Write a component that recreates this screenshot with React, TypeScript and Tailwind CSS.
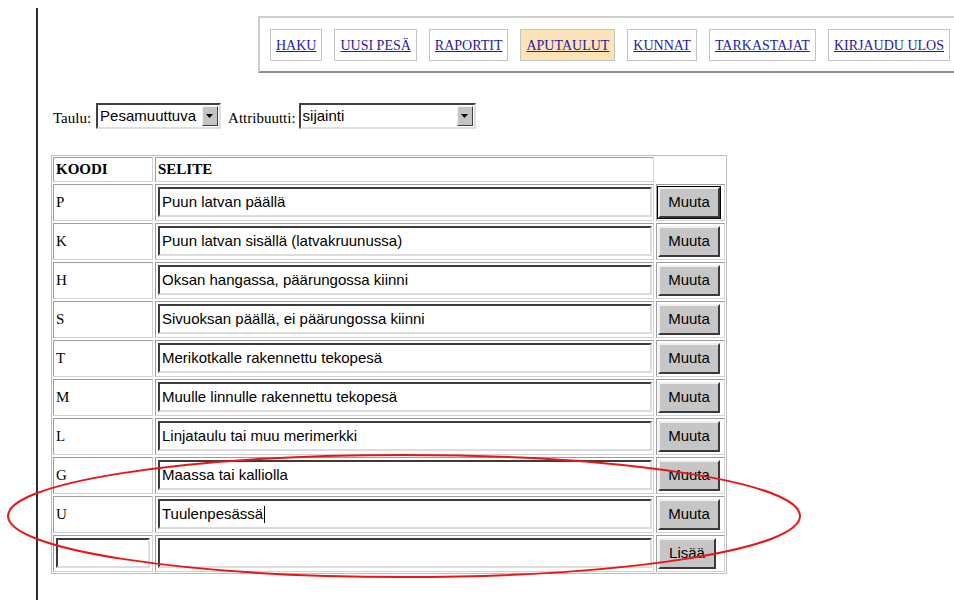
import React from "react";

const navItems = [
  { label: "HAKU" },
  { label: "UUSI PESÄ" },
  { label: "RAPORTIT" },
  { label: "APUTAULUT", active: true },
  { label: "KUNNAT" },
  { label: "TARKASTAJAT" },
  { label: "KIRJAUDU ULOS" },
];

const rows = [
  { code: "P", text: "Puun latvan päällä" },
  { code: "K", text: "Puun latvan sisällä (latvakruunussa)" },
  { code: "H", text: "Oksan hangassa, päärungossa kiinni" },
  { code: "S", text: "Sivuoksan päällä, ei päärungossa kiinni" },
  { code: "T", text: "Merikotkalle rakennettu tekopesä" },
  { code: "M", text: "Muulle linnulle rakennettu tekopesä" },
  { code: "L", text: "Linjataulu tai muu merimerkki" },
  { code: "G", text: "Maassa tai kalliolla" },
  { code: "U", text: "Tuulenpesässä", caret: true },
];

const serif = "font-['Liberation_Serif',_'Times_New_Roman',_serif]";
const sans = "font-['Liberation_Sans',_Arial,_sans-serif]";

function Select({ value, width }: { value: string; width: string }) {
  return (
    <div
      className={`flex h-[26px] ${width} border-2 border-t-[#404040] border-l-[#404040] border-b-[#dedede] border-r-[#dedede] bg-white`}
    >
      <div className={`flex-1 flex items-center pl-[2px] text-[15px] text-black ${sans} whitespace-nowrap overflow-hidden`}>
        {value}
      </div>
      <div className="my-[1px] mr-[1px] w-[16px] flex items-center justify-center bg-[#c4c4c4] border border-t-[#f2f2f2] border-l-[#f2f2f2] border-b-[#404040] border-r-[#404040]">
        <svg width="8" height="5" viewBox="0 0 8 5">
          <path d="M0 0 H7 L3.5 4 Z" fill="#000" />
        </svg>
      </div>
    </div>
  );
}

function Field({ value, caret, width }: { value: string; caret?: boolean; width: string }) {
  return (
    <div
      className={`h-[30px] ${width} flex items-center px-[2px] border-2 border-t-[#3c3c3c] border-l-[#3c3c3c] border-b-[#dcdcdc] border-r-[#dcdcdc] bg-white text-[15px] text-black ${sans} whitespace-nowrap overflow-hidden`}
    >
      <span>{value}</span>
      {caret && <span className="ml-[1px] inline-block w-[1px] h-[17px] bg-black" />}
    </div>
  );
}

function Button({ label, width, focused }: { label: string; width: string; focused?: boolean }) {
  return (
    <div
      className={`${width} h-[31px] ml-[1px] flex items-center justify-center bg-[#c6c6c6] border-2 border-t-[#f0f0f0] border-l-[#f0f0f0] border-b-[#3a3a3a] border-r-[#3a3a3a] text-[15px] text-black ${sans} ${
        focused ? "outline outline-1 outline-black" : ""
      }`}
    >
      {label}
    </div>
  );
}

const cell =
  "border border-t-[#9c9c9c] border-l-[#9c9c9c] border-b-[#d2d2d2] border-r-[#d2d2d2] bg-white";

export default function App() {
  return (
    <div className="relative w-[954px] h-[600px] overflow-hidden bg-white pt-[8px] pl-[36px]">
      <div className="h-[592px] border-l-2 border-[#2c2c2c] flex flex-col">
        {/* top navigation */}
        <div className="mt-[8px] ml-[220px] h-[57px] w-[760px] border-2 border-t-[#cfcfcf] border-l-[#cfcfcf] border-b-[#8e8e8e] border-r-[#8e8e8e] pt-[11px] pl-[10px]">
          <div className="flex gap-[12px]">
            {navItems.map((item) => (
              <div
                key={item.label}
                className={`h-[32px] px-[5px] flex items-center border border-[#c4c4c4] whitespace-nowrap ${
                  item.active ? "bg-[#fde3b6]" : "bg-white"
                }`}
              >
                <a className={`text-[14px] underline text-[#1c1ca8] ${serif}`} href="#">
                  {item.label}
                </a>
              </div>
            ))}
          </div>
        </div>

        {/* table / attribute selectors */}
        <div className={`mt-[30px] ml-[15px] flex items-center text-[15px] text-black ${serif}`}>
          <span className="mt-[4px]">Taulu:</span>
          <div className="ml-[5px]">
            <Select value="Pesamuuttuva" width="w-[125px]" />
          </div>
          <span className="ml-[7px] mt-[4px]">Attribuutti:</span>
          <div className="ml-[3px]">
            <Select value="sijainti" width="w-[177px]" />
          </div>
        </div>

        {/* code table */}
        <div className="mt-[25px] ml-[13px] w-[676px] border border-[#bdbdbd] p-[1px] flex flex-col gap-[2px]">
          <div className="flex gap-[2px] h-[25px]">
            <div className={`w-[100px] ${cell} flex items-center pl-[2px] font-bold text-[15px] ${serif}`}>KOODI</div>
            <div className={`w-[499px] ${cell} flex items-center pl-[2px] font-bold text-[15px] ${serif}`}>SELITE</div>
            <div className="w-[69px]" />
          </div>
          {rows.map((r, i) => (
            <div key={r.code} className="flex gap-[2px] h-[37px]">
              <div className={`w-[100px] ${cell} flex items-center pl-[2px] text-[15px] ${serif}`}>{r.code}</div>
              <div className={`w-[499px] ${cell} flex items-center pl-[2px]`}>
                <Field value={r.text} caret={r.caret} width="w-[494px]" />
              </div>
              <div className={`w-[69px] ${cell} flex items-center`}>
                <Button label="Muuta" width="w-[62px]" focused={i === 0} />
              </div>
            </div>
          ))}
          <div className="flex gap-[2px] h-[37px]">
            <div className={`w-[100px] ${cell} flex items-center pl-[2px]`}>
              <Field value="" width="w-[94px]" />
            </div>
            <div className={`w-[499px] ${cell} flex items-center pl-[2px]`}>
              <Field value="" width="w-[494px]" />
            </div>
            <div className={`w-[69px] ${cell} flex items-center`}>
              <Button label="Lisää" width="w-[58px]" />
            </div>
          </div>
        </div>
      </div>

      {/* red annotation ring */}
      <svg
        className="absolute left-0 top-0 pointer-events-none"
        width="954"
        height="600"
        viewBox="0 0 954 600"
      >
        <ellipse cx="404" cy="516" rx="396" ry="61" fill="none" stroke="#ec1515" strokeWidth="2" />
      </svg>
    </div>
  );
}
